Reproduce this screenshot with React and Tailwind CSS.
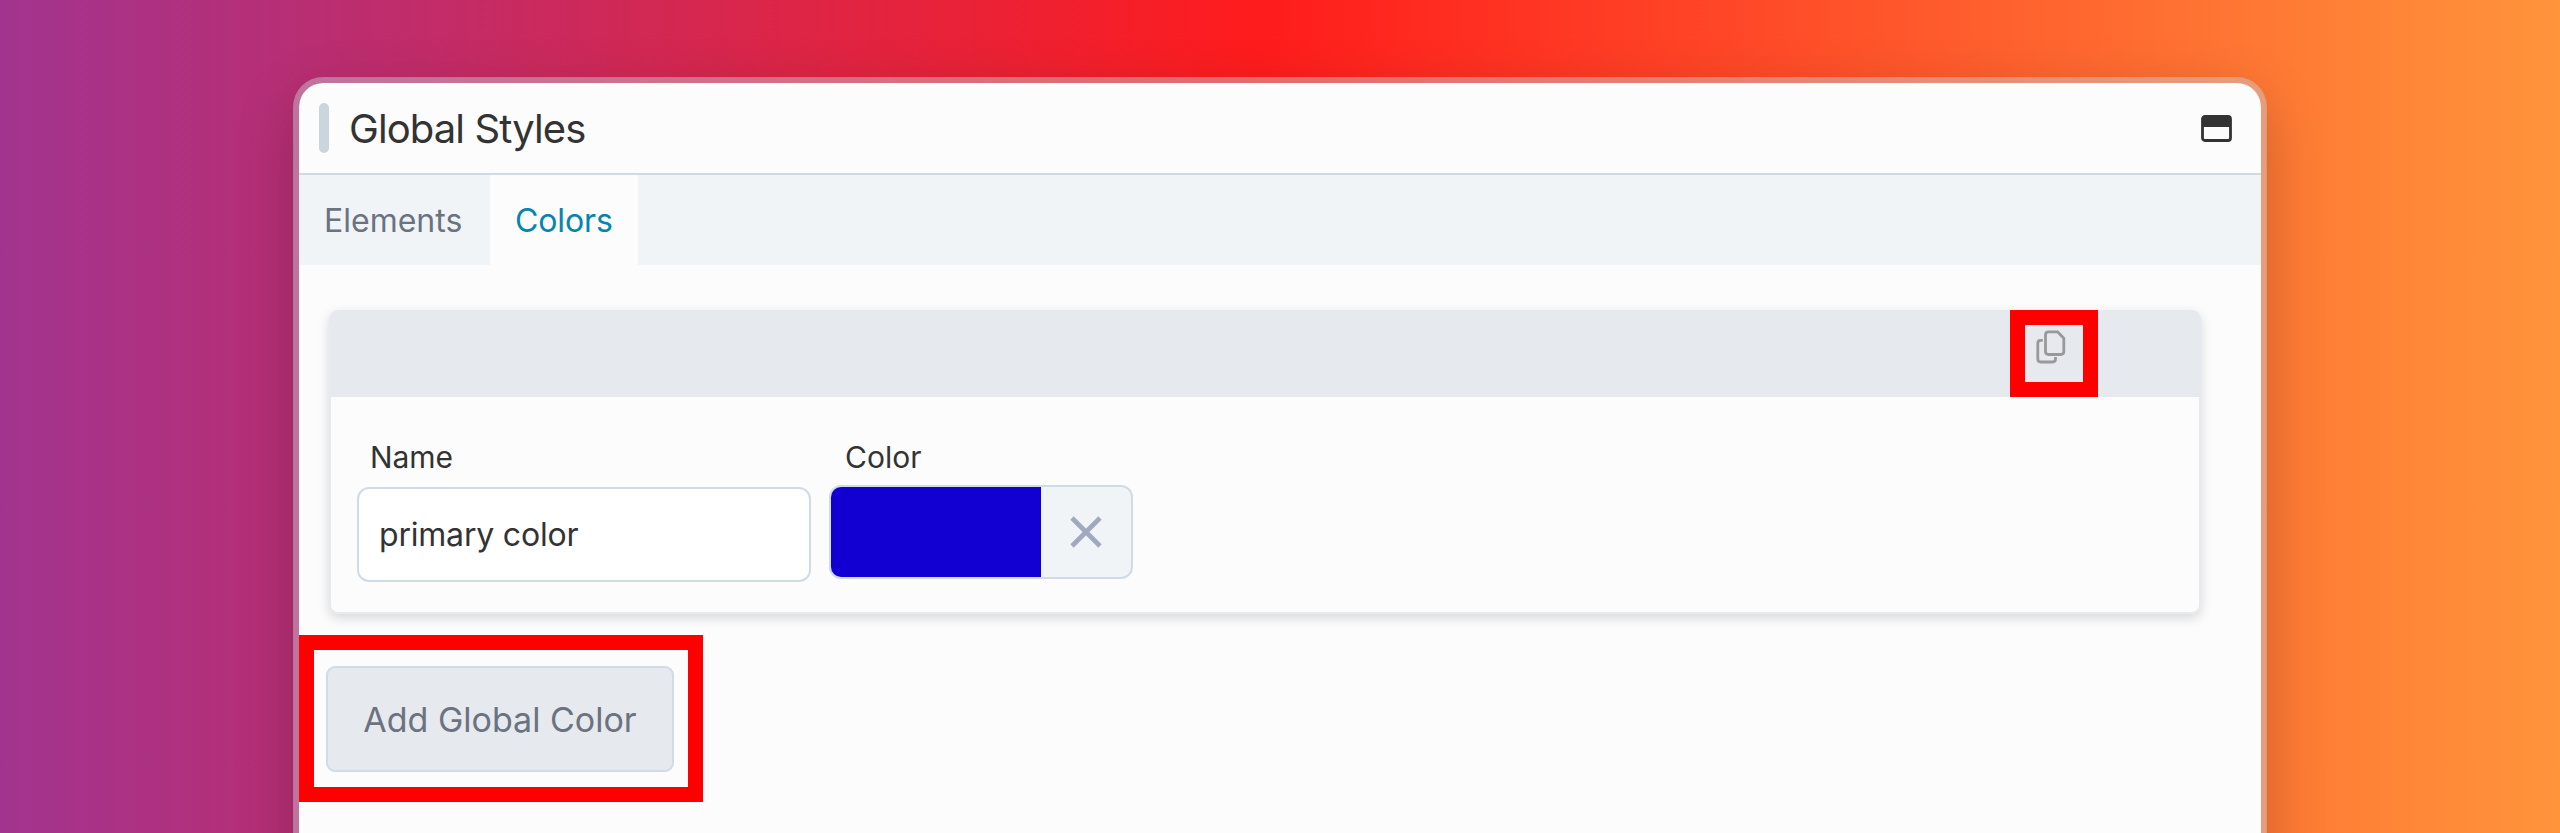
import React from "react";

function WindowIcon() {
  return (
    <svg className="block h-[27px] w-[31px]" viewBox="0 0 31 27">
      <rect x="1.5" y="1.5" width="28" height="24" rx="2.5" fill="none" stroke="#333333" strokeWidth="2.8" />
      <path d="M1 3.5Q1 1 3.5 1H27.5Q30 1 30 3.5V12H1Z" fill="#333333" />
    </svg>
  );
}

function CopyIcon() {
  return (
    <svg className="block h-[34px] w-[30px]" viewBox="0 0 30 34" fill="none" stroke="#999999" strokeWidth="2.8" strokeLinejoin="round">
      <path d="M12.500 1.800H21.500L27.800 8.300V21.500Q27.800 24.500 24.800 24.500H12.500Q9.500 24.500 9.500 21.500V4.800Q9.500 1.800 12.500 1.800Z" />
      <path d="M6.800 10.300H4.500Q1.800 10.300 1.800 13.300V29Q1.800 32 4.800 32H16.500Q19.500 32 19.500 29V27" />
    </svg>
  );
}

export default function App() {
  return (
    <div className="h-[833px] w-[2560px] overflow-hidden bg-[linear-gradient(90deg,#a2348f_0%,#ff1c1c_49.3%,#ff943b_100%)] pl-[293px] pt-[77px] font-['Inter',sans-serif] font-[430] text-[#333333]">
      <div className="h-[900px] w-[1974px] rounded-[30px] border-[6px] border-[#c7cad2]/45 bg-[#fcfcfc] bg-clip-padding shadow-[0_20px_60px_rgba(0,0,0,0.2)]">
        <header className="flex h-[92px] items-center border-b-2 border-[#d0dae5] pl-5 pr-[29px]">
          <div className="h-[50px] w-[10px] rounded-full bg-[#cbd5de]" />
          <h1 className="ml-5 pt-px text-[40px] leading-[50px] tracking-[-0.9px]">Global Styles</h1>
          <div className="ml-auto">
            <WindowIcon />
          </div>
        </header>
        <nav className="flex h-[90px] bg-[#f0f4f7] text-[32px] leading-[91px]">
          <div className="w-[191px] pl-[25px] text-[#6b7280]">Elements</div>
          <div className="w-[148px] bg-[#fcfcfc] pl-[25px] tracking-[-0.1px] text-[#0584ae]">Colors</div>
        </nav>
        <section className="ml-[30px] mt-[45px] h-[304px] w-[1872px] overflow-visible rounded-[9px] border-2 border-t-0 border-[#e6e9ee] shadow-[0_4px_12px_rgba(0,0,0,0.15)]">
          <div className="flex h-[87px] justify-end rounded-t-[7px] bg-[#e6e9ee] pr-[101px]">
            <div className="h-[87px] w-[88px] border-[15px] border-[#ff0000] pl-[11px] pt-[5px]">
              <CopyIcon />
            </div>
          </div>
          <div className="flex pl-[26px]">
            <div className="w-[454px]">
              <div className="mt-[40px] pl-[13px] text-[30px] leading-[40px] tracking-[-0.1px]">Name</div>
              <div className="mt-[10px] h-[95px] rounded-[12px] border-2 border-[#d1dbe7] bg-white pl-5 text-[32px] leading-[92px] tracking-[-0.2px]">primary color</div>
            </div>
            <div className="ml-[18px] w-[304px]">
              <div className="mt-[40px] pl-[16px] text-[30px] leading-[40px]">Color</div>
              <div className="mt-[8px] flex h-[94px] overflow-hidden rounded-[12px] border-2 border-[#d1dbe7] bg-[#f0f4f7]">
                <div className="w-[210px] bg-[#1100d1]" />
                <div className="flex flex-1 items-center justify-center">
                  <svg className="h-[32px] w-[32px]" viewBox="0 0 32 32" stroke="#a0aabe" strokeWidth="4.600">
                    <path d="M2 2L30 30M30 2L2 30" />
                  </svg>
                </div>
              </div>
            </div>
          </div>
        </section>
        <div className="mt-[21px] h-[167px] w-[404px] border-[15px] border-[#ff0000] pl-[12px] pt-[16px]">
          <button className="block h-[106px] w-[348px] rounded-[9px] border-2 border-[#d1dbe5] bg-[#e6e9ee] pt-px text-[34px] leading-[100px] text-[#6b7280]">Add Global Color</button>
        </div>
      </div>
    </div>
  );
}
